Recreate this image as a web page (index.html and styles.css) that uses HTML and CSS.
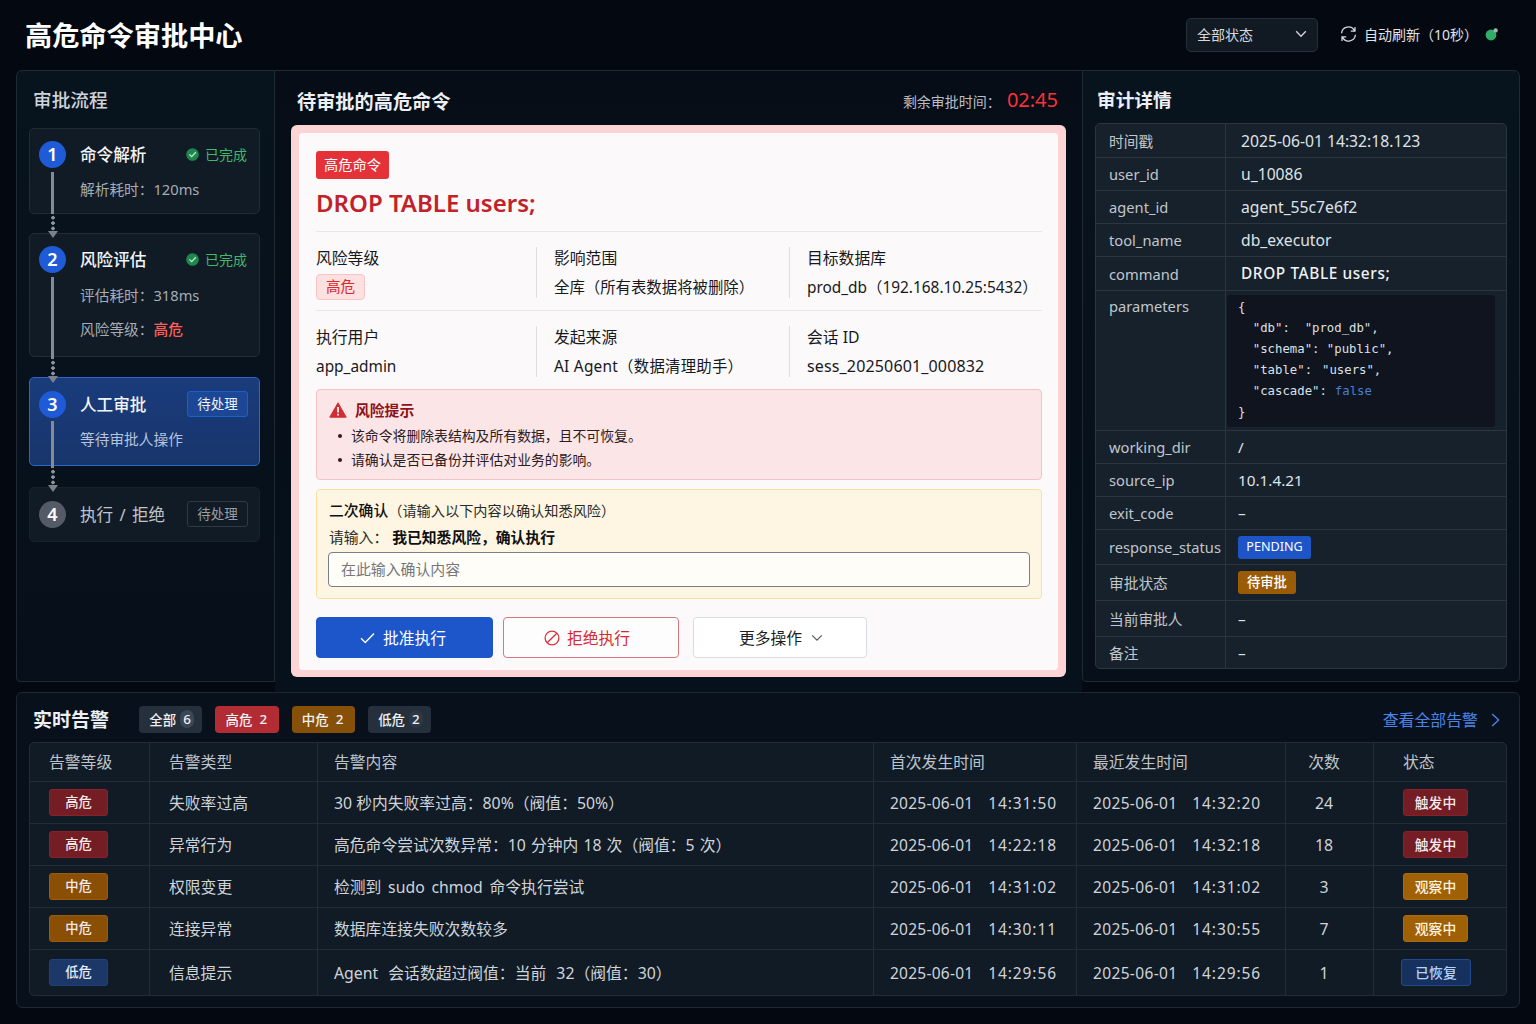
FILE: index.html
```html
<!DOCTYPE html>
<html lang="zh-CN">
<head>
<meta charset="utf-8">
<title>高危命令审批中心</title>
<link rel="stylesheet" href="styles.css">
</head>
<body>
<header class="topbar">
  <h1>高危命令审批中心</h1>
  <div class="select"><span>全部状态</span>
    <svg width="12" height="8" viewBox="0 0 12 8"><path d="M1.2 1.3 6 6.2l4.8-4.9" fill="none" stroke="#d3d7dd" stroke-width="1.3"/></svg>
  </div>
  <div class="refresh">
    <svg width="17" height="16" viewBox="0 0 17 16" fill="none" stroke="#d6dae0" stroke-width="1.3"><path d="M1.6 7.2A6.8 6.8 0 0 1 14.4 4.6M15.4 8.8A6.8 6.8 0 0 1 2.6 11.4M15 1v4.2h-4.2M2 15v-4.2h4.2"/></svg>
    <span>自动刷新（10秒）</span>
    <svg class="live" width="14" height="14" viewBox="0 0 14 14"><circle cx="6" cy="8" r="5.4" fill="#2fae68"/><circle cx="10.6" cy="3.4" r="2.2" fill="#a3b5b2"/></svg>
  </div>
</header>

<main class="board">
  <section class="flow">
    <h2 class="thin">审批流程</h2>
    <ol class="steps">
      <li class="step s1">
        <div class="step-head"><b class="num">1</b><span class="name">命令解析</span>
          <span class="done"><svg width="13" height="13" viewBox="0 0 13 13"><circle cx="6.5" cy="6.5" r="6.3" fill="#1f874e"/><path d="M3.4 6.4 5.7 8.6 9.8 4.3" fill="none" stroke="#b5f2c9" stroke-width="1.3"/></svg>已完成</span></div>
        <p>解析耗时：120ms</p>
        <div class="link"><i class="line"></i><i class="dots"></i><i class="tip"></i></div>
      </li>
      <li class="step s2">
        <div class="step-head"><b class="num">2</b><span class="name">风险评估</span>
          <span class="done"><svg width="13" height="13" viewBox="0 0 13 13"><circle cx="6.5" cy="6.5" r="6.3" fill="#1f874e"/><path d="M3.4 6.4 5.7 8.6 9.8 4.3" fill="none" stroke="#b5f2c9" stroke-width="1.3"/></svg>已完成</span></div>
        <p>评估耗时：318ms</p>
        <p>风险等级：<em>高危</em></p>
        <div class="link"><i class="line"></i><i class="dots"></i><i class="tip"></i></div>
      </li>
      <li class="step s3 active">
        <div class="step-head"><b class="num">3</b><span class="name">人工审批</span><span class="wait">待处理</span></div>
        <p>等待审批人操作</p>
        <div class="link"><i class="line"></i><i class="dots"></i><i class="tip"></i></div>
      </li>
      <li class="step s4 idle">
        <div class="step-head"><b class="num">4</b><span class="name">执行 / 拒绝</span><span class="wait">待处理</span></div>
      </li>
    </ol>
  </section>

  <section class="review">
    <div class="review-head">
      <h2>待审批的高危命令</h2>
      <div class="countdown">剩余审批时间：<strong>02:45</strong></div>
    </div>
    <div class="frame">
    <article class="danger">
      <span class="danger-tag">高危命令</span>
      <h3>DROP TABLE users;</h3>
      <dl class="facts">
        <div><dt>风险等级</dt><dd><span class="level">高危</span></dd></div>
        <div><dt>影响范围</dt><dd>全库（所有表数据将被删除）</dd></div>
        <div><dt>目标数据库</dt><dd>prod_db（192.168.10.25:5432）</dd></div>
      </dl>
      <dl class="facts second">
        <div><dt>执行用户</dt><dd>app_admin</dd></div>
        <div><dt>发起来源</dt><dd class="agent">AI Agent（数据清理助手）</dd></div>
        <div><dt>会话 ID</dt><dd class="wide">sess_20250601_000832</dd></div>
      </dl>
      <div class="warning">
        <h4><svg width="18" height="16" viewBox="0 0 18 16"><path d="M9 .8 17.2 15.2H.8Z" fill="#cf2d33" stroke="#cf2d33" stroke-linejoin="round"/><path d="M9 5v5.4M9 11.8v1.8" stroke="#fff" stroke-width="1.7"/></svg>风险提示</h4>
        <ul><li>该命令将删除表结构及所有数据，且不可恢复。</li><li>请确认是否已备份并评估对业务的影响。</li></ul>
      </div>
      <div class="confirm">
        <p class="c1"><b>二次确认</b>（请输入以下内容以确认知悉风险）</p>
        <p class="c2">请输入：<b>我已知悉风险，确认执行</b></p>
        <input type="text" placeholder="在此输入确认内容">
      </div>
      <div class="actions">
        <button class="approve"><svg width="15" height="12" viewBox="0 0 15 12"><path d="M1 6.3 5.3 10.6 14 1.4" fill="none" stroke="#fff" stroke-width="1.4"/></svg>批准执行</button>
        <button class="reject"><svg width="16" height="16" viewBox="0 0 16 16" fill="none" stroke="#d8333a" stroke-width="1.3"><circle cx="8" cy="8" r="6.9"/><path d="M3.2 12.8 12.8 3.2"/></svg>拒绝执行</button>
        <button class="more">更多操作<svg width="12" height="8" viewBox="0 0 12 8"><path d="M1.2 1.3 6 6.2l4.8-4.9" fill="none" stroke="#555b64" stroke-width="1.2"/></svg></button>
      </div>
    </article>
    </div>
  </section>

  <section class="audit">
    <h2>审计详情</h2>
    <dl class="audit-table">
      <dt>时间戳</dt><dd class="in">2025-06-01 14:32:18.123</dd>
      <dt>user_id</dt><dd class="in">u_10086</dd>
      <dt>agent_id</dt><dd class="in">agent_55c7e6f2</dd>
      <dt>tool_name</dt><dd class="in">db_executor</dd>
      <dt>command</dt><dd class="in cmd">DROP TABLE users;</dd>
      <dt class="top">parameters</dt>
      <dd class="code"><div class="json">
        <p>{</p>
        <p>  "db":  "prod_db",</p>
        <p>  "schema": "public",</p>
        <p class="pair loose"><span>  "table":</span><span>"users",</span></p>
        <p class="pair"><span>  "cascade":</span><span class="bool">false</span></p>
        <p>}</p>
      </div></dd>
      <dt>working_dir</dt><dd>/</dd>
      <dt>source_ip</dt><dd>10.1.4.21</dd>
      <dt>exit_code</dt><dd>–</dd>
      <dt>response_status</dt><dd><span class="chip blue">PENDING</span></dd>
      <dt>审批状态</dt><dd><span class="chip amber">待审批</span></dd>
      <dt>当前审批人</dt><dd>–</dd>
      <dt>备注</dt><dd>–</dd>
    </dl>
  </section>
</main>

<section class="alerts">
  <div class="alerts-head">
    <h2>实时告警</h2>
    <div class="filters">
      <span class="pill">全部<i class="round">6</i></span>
      <span class="pill red">高危<i>2</i></span>
      <span class="pill amber">中危<i>2</i></span>
      <span class="pill">低危<i class="round faint">2</i></span>
    </div>
    <a class="all">查看全部告警<svg width="9" height="14" viewBox="0 0 9 14"><path d="M1.2 1 7.6 7l-6.4 6" fill="none" stroke="#4d84e8" stroke-width="1.4"/></svg></a>
  </div>
  <table>
    <colgroup><col class="k1"><col class="k2"><col class="k3"><col class="k4"><col class="k5"><col class="k6"><col class="k7"></colgroup>
    <thead><tr><th>告警等级</th><th>告警类型</th><th>告警内容</th><th>首次发生时间</th><th>最近发生时间</th><th>次数</th><th>状态</th></tr></thead>
    <tbody>
      <tr><td><span class="tag high">高危</span></td><td>失败率过高</td><td>30 秒内失败率过高：80%（阀值：50%）</td><td><time>2025-06-01 <i>14:31:50</i></time></td><td><time>2025-06-01 <i>14:32:20</i></time></td><td>24</td><td><span class="tag state high">触发中</span></td></tr>
      <tr><td><span class="tag high">高危</span></td><td>异常行为</td><td>高危命令尝试次数异常：10 分钟内 18 次（阀值：5 次）</td><td><time>2025-06-01 <i>14:22:18</i></time></td><td><time>2025-06-01 <i>14:32:18</i></time></td><td>18</td><td><span class="tag state high">触发中</span></td></tr>
      <tr><td><span class="tag mid">中危</span></td><td>权限变更</td><td>检测到 sudo chmod 命令执行尝试</td><td><time>2025-06-01 <i>14:31:02</i></time></td><td><time>2025-06-01 <i>14:31:02</i></time></td><td>3</td><td><span class="tag state watch">观察中</span></td></tr>
      <tr><td><span class="tag mid">中危</span></td><td>连接异常</td><td>数据库连接失败次数较多</td><td><time>2025-06-01 <i>14:30:11</i></time></td><td><time>2025-06-01 <i>14:30:55</i></time></td><td>7</td><td><span class="tag state watch">观察中</span></td></tr>
      <tr><td><span class="tag low">低危</span></td><td>信息提示</td><td>Agent 会话数超过阀值：当前 32（阀值：30）</td><td><time>2025-06-01 <i>14:29:56</i></time></td><td><time>2025-06-01 <i>14:29:56</i></time></td><td>1</td><td><span class="tag state fixed">已恢复</span></td></tr>
    </tbody>
  </table>
</section>
</body>
</html>
```
FILE: styles.css
```css
* { box-sizing: border-box; margin: 0; padding: 0; }
body {
  width: 1536px; height: 1024px; overflow: hidden; padding: 0 16px;
  background: #030811; color: #dfe3e8;
  font-family: "Noto Sans", "Noto Sans CJK SC", sans-serif; font-size: 15px;
}
h1, h2, h3, h4 { white-space: nowrap; }
i { font-style: normal; }
svg { display: block; flex: none; }
ol, ul { list-style: none; }

/* top bar */
.topbar { height: 70px; display: flex; align-items: center; padding: 0 20px 0 9px; }
h1 { flex: 1; padding-top: 1px; font-size: 27.2px; line-height: 40px; font-weight: 700; color: #fff; }
.select {
  width: 132px; height: 34px; display: flex; align-items: center; justify-content: space-between;
  padding: 0 10px 2px 10px; border: 1px solid #27303a; border-radius: 5px; background: #111923;
  font-size: 14px; color: #d5d9df;
}
.refresh { display: flex; align-items: center; margin-left: 22px; margin-right: 1px; padding-bottom: 2px; font-size: 14px; color: #e0e3e8; white-space: nowrap; }
.refresh span { margin-left: 7px; width: 121px; }
h2 { font-size: 18.7px; line-height: 28px; font-weight: 500; color: #eceff3; }

/* main board */
.board { display: grid; grid-template-columns: 259px 807px 438px; height: 622px; }
.flow, .audit { height: 612px; border: 1px solid #1f2a34; background: linear-gradient(#07131d, #07101a); }
.flow { border-radius: 6px 0 0 4px; padding: 15px 14px 0 12px; }
.flow h2 { margin-left: 4px; }
h2.thin { color: #cfd4da; }
.step {
  position: relative; border: 1px solid #222c36; border-radius: 5px; background: #111b25;
  padding: 11px 11px 0 9px;
}
.steps { display: flex; flex-direction: column; margin-top: 14px; }
.s1 { height: 86px; margin-bottom: 19px; }
.s2 { height: 124px; margin-bottom: 20px; }
.s3 { height: 89px; margin-bottom: 21px; }
.s4 { height: 55px; }
.s3, .s4 { padding-top: 12px; }
.step-head { display: flex; align-items: center; height: 28px; }
.num {
  width: 27px; height: 27px; border-radius: 50%; background: #1f5bd6; color: #fff;
  font-size: 18px; line-height: 27px; text-align: center; font-weight: 600;
}
.name { flex: 1; margin-left: 14px; font-size: 16.6px; font-weight: 500; color: #f2f4f7; white-space: nowrap; }
.done { display: flex; align-items: center; gap: 6px; font-size: 14px; color: #3fb86b; margin-right: 1px; }
.wait {
  width: 61px; height: 26px; border: 1px solid #1f5dc8; border-radius: 3px; background: #1b4796;
  font-size: 13.5px; line-height: 24px; text-align: center; color: #edf2fb;
}
.step p { margin: 9px 0 0 41px; font-size: 14.7px; line-height: 24px; color: #a5acb5; white-space: nowrap; }
.s2 p { margin-top: 10px; }
.s2 em { font-style: normal; font-weight: 500; color: #ff5f58; }
.active { background: linear-gradient(#1a3c7c, #18356b); border-color: #2b66cc; }
.active p { color: #b7c3dc; }
.idle { border-color: #19222b; }
.idle .num { background: #555b66; }
.idle .name { color: #c0c5cc; font-weight: 400; word-spacing: 2px; }
.idle .wait { background: transparent; border-color: #303841; color: #979ea7; }
.link {
  position: absolute; left: 17.5px; top: 43px; bottom: -25px; z-index: 2;
  display: flex; flex-direction: column; align-items: center; width: 10px;
}
.link .line { flex: 1; width: 3px; background: #858b93; }
.link .dots { width: 4px; height: 17px; background: radial-gradient(circle, #8d939b 1.6px, transparent 2px) 0 1px / 4px 5.4px; }
.link .tip { border: 5px solid transparent; border-top: 7px solid #7c8289; border-bottom: 0; }
.s2 .link, .s3 .link { bottom: -27px; }

/* review column */
.review { border-top: 1px solid #1f2a34; background: linear-gradient(#060d17, #06111b); padding: 0 16px; }
.review-head { height: 54px; display: flex; justify-content: space-between; padding: 17px 8px 0 6px; }
.review h2 { font-size: 19.2px; font-weight: 600; }
.countdown { font-size: 14px; line-height: 28px; color: #b9bfc7; margin-top: -2px; white-space: nowrap; }
.countdown strong { font-size: 20px; font-weight: 400; color: #fa3038; margin-left: 6px; }
.frame { height: 552px; padding: 8px; border-radius: 6px; background: #fdd4d5; }
.danger {
  height: 537px; border-radius: 4px; color: #16181c;
  background: #fcf9fa; padding: 18px 16px 0 17px;
}
.danger-tag {
  display: block; width: 73px; height: 28px; border-radius: 3px; background: #e53138; color: #fff;
  font-size: 14.2px; line-height: 27px; text-align: center;
}
.danger h3 { margin-top: 8px; height: 44px; font-size: 24px; line-height: 32px; font-weight: 600; color: #c1222a; }
.facts { display: grid; grid-template-columns: 220px 253px 1fr; border-top: 1px solid #e9e7ea; height: 79px; padding-top: 15px; }
.facts > div { height: 51px; border-left: 1px solid #dedee1; padding-left: 17px; white-space: nowrap; }
.facts > div:first-child { border: 0; padding-left: 0; }
dt { line-height: 24px; }
.facts dt { font-size: 15.8px; line-height: 23px; }
.facts dd { font-size: 15.4px; line-height: 25px; margin-top: 5px; }
.facts .wide { font-size: 16px; letter-spacing: .15px; line-height: 24px; }
.facts .agent { letter-spacing: .25px; }
.second { height: 79px; padding-top: 15px; }
.level {
  display: block; width: 49px; height: 26px; margin-top: -1px; border: 1px solid #fac3c4; border-radius: 4px;
  background: #fde0e0; color: #e0262e; font-size: 14.6px; line-height: 23px; text-align: center;
}
.warning { height: 91px; border: 1px solid #f6c2c5; border-radius: 4px; background: #fce5e6; padding: 8px 12px; }
.warning h4 { display: flex; align-items: center; gap: 8px; font-size: 14.8px; line-height: 24px; font-weight: 600; color: #8f1218; }
.warning li { position: relative; padding-left: 22px; font-size: 13.85px; line-height: 23.5px; color: #2a2023; white-space: nowrap; }
.warning ul { margin-top: 2px; }
.warning li::before { content: ""; position: absolute; left: 9px; top: 10px; width: 4px; height: 4px; border-radius: 50%; background: #40161a; }
.confirm { height: 110px; margin-top: 9px; border: 1px solid #f9e0a2; border-radius: 4px; background: #fef6e3; padding: 7px 12px 0 12px; }
.confirm p { line-height: 26px; white-space: nowrap; color: #2b2a28; }
.confirm b { font-weight: 500; font-size: 14.8px; color: #101010; }
.confirm .c1 { font-size: 14.2px; }
.confirm .c2 { font-size: 14.8px; }
.c2 b { margin-left: 4px; font-weight: 600; }
.confirm input {
  display: block; width: 702px; height: 35px; margin: 2px 0 0 -1px; border: 1px solid #797f86; border-radius: 4px;
  background: #fffdf7; padding: 0 12px 1px; font: 14.9px "Noto Sans", "Noto Sans CJK SC", sans-serif;
}
.confirm input::placeholder { color: #75777a; opacity: 1; }
.actions { display: flex; margin-top: 18px; }
.actions button {
  height: 41px; border-radius: 4px; display: flex; align-items: center; justify-content: center; gap: 8px;
  font: 15.8px "Noto Sans", "Noto Sans CJK SC", sans-serif; border: 1px solid; white-space: nowrap;
}
.actions .approve { width: 177px; padding-right: 3px; background: #1d56cb; border-color: #1d56cb; color: #fff; }
.actions .reject { width: 176px; margin-left: 10px; padding-right: 8px; gap: 7px; background: #fefdfd; border-color: #d5777b; color: #d62a32; }
.actions .more { width: 174px; margin-left: 14px; gap: 9px; background: #fff; border-color: #d9dce0; color: #1b1e24; padding-left: 2px; }

/* audit column */
.audit { border-radius: 0 6px 4px 4px; padding: 15px 12px 0 12px; }
.audit h2 { margin-left: 2px; font-weight: 600; }
.audit-table {
  display: grid; grid-template-columns: 130px 1fr; margin-top: 9px; height: 546px; overflow: hidden;
  grid-template-rows: 34px 33px 33px 33px 34px 140px 33px 33px 33px 35px 36px 36px 1fr;
  border: 1px solid #2b3640; border-radius: 5px; background: #17212b;
}
.audit-table dt, .audit-table dd { display: flex; align-items: center; border-bottom: 1px solid #2b3640; white-space: nowrap; }
.audit-table dt { padding-left: 13px; border-right: 1px solid #2b3640; font-size: 14.7px; color: #c0c6cd; }
.audit-table dd { padding-left: 12px; font-size: 15.3px; color: #dfe3e8; }
.audit-table dd.in { padding-left: 15px; font-size: 15.7px; }
.audit-table dd.cmd { font-size: 15.4px; font-weight: 500; letter-spacing: .6px; color: #f0f2f5; }
.audit-table dt.top { align-items: flex-start; padding-top: 3px; }
.audit-table dt:nth-last-of-type(1), .audit-table dd:last-child { border-bottom: 0; }
.audit-table dd.code { padding: 0 0 0 1px; }
.json {
  width: 268px; height: 132px; border-radius: 4px; background: #0f141f; padding: 2px 0 0 11px;
  font-family: "DejaVu Sans Mono", monospace; font-size: 12.3px; color: #dde1e7;
}
.json p { height: 21px; line-height: 20px; white-space: pre; }
.json .pair { display: flex; gap: 8px; }
.json .loose { gap: 10px; }
.json .bool { color: #4a7fd6; }
.chip { height: 23px; border-radius: 3px; font-size: 13.3px; line-height: 22px; padding: 0 9px; color: #fff; }
.chip.blue { width: 73px; padding: 0; text-align: center; font-size: 12.6px; background: #1d54c6; }
.chip.amber { background: #9a5b07; font-weight: 500; }

/* alerts */
.alerts { height: 316px; border: 1px solid #1e2933; border-radius: 6px; background: #08111b; padding: 0 12px; }
.alerts-head { display: flex; align-items: center; height: 49px; padding: 4px 7px 0 4px; }
.alerts h2 { font-size: 19px; font-weight: 600; width: 106px; }
.filters { display: flex; gap: 13px; flex: 1; }
.pill {
  width: 63.3px; height: 27px; border-radius: 4px; background: #25303c; color: #eef0f3; padding-bottom: 1px;
  display: flex; align-items: center; justify-content: center; gap: 4px; padding-left: 2px; font-size: 13.4px; font-weight: 500;
}
.pill i { width: 14px; text-align: center; }
.pill .round { height: 18px; line-height: 18px; border-radius: 9px; background: #3b4755; }
.pill .faint { background: #2c3845; }
.pill.red { background: #b32c33; }
.pill.amber { background: #875009; }
.all { display: flex; align-items: center; gap: 13px; font-size: 15.9px; color: #4d84e8; }
table {
  width: 1478px; height: 254px; table-layout: fixed; border-spacing: 0;
  border: 1px solid #232d37; border-radius: 5px; background: #111b25;
}
.k1 { width: 119px; } .k2 { width: 168px; } .k3 { width: 556px; } .k4 { width: 203px; }
.k5 { width: 209px; } .k6 { width: 88px; } .k7 { width: 133px; }
th, td {
  text-align: left; font-weight: 400; font-size: 15.8px; color: #cfd4da; white-space: nowrap;
  border-left: 1px solid #232d37; border-top: 1px solid #232d37; padding-left: 16px; line-height: 24px;
}
th { color: #bec4cb; border-top: 0; height: 38px; }
td { height: 42px; }
tr:last-child td { height: 46px; }
th:first-child, td:first-child { border-left: 0; padding-left: 19px; }
th:nth-child(2), td:nth-child(2) { padding-left: 19px; }
td:nth-child(3) { word-spacing: 2.6px; }
tr:first-child td:nth-child(3) { word-spacing: 0; }
tr:nth-child(2) td:nth-child(3) { word-spacing: 1px; }
tr:last-child td:nth-child(3) { word-spacing: 6px; }
td:nth-child(5) time { letter-spacing: .35px; }
th:nth-child(6), td:nth-child(6) { padding: 0 11px 0 0; text-align: center; }
th:nth-child(7), td:nth-child(7) { padding-left: 29px; }
time { font-size: 15.5px; letter-spacing: .25px; word-spacing: 10.5px; }
time i { letter-spacing: .9px; }
.tag {
  display: block; width: 59px; height: 27px; border-radius: 3px; border: 1px solid; text-align: center;
  font-size: 13.3px; line-height: 25px; font-weight: 500; color: #f4e9ea;
}
.state { width: 65px; font-size: 13.8px; }
.high { background: #741d24; border-color: #87212a; }
.mid { background: #8a4f05; border-color: #9a5b0a; }
.watch { background: #a06006; border-color: #ab6a0c; color: #fff3dd; }
.low { background: #1b3869; border-color: #20427c; color: #e4ebf7; }
.fixed { width: 70px; margin-left: -2px; background: #17315f; border-color: #234a8c; color: #b5d3fa; }
```
